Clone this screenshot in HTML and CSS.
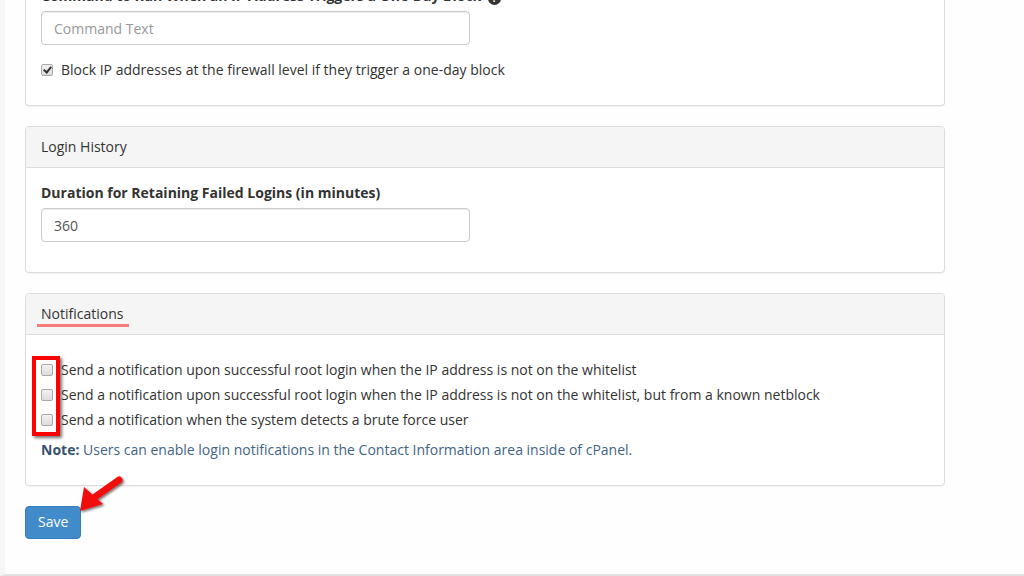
FILE: index.html
```html
<!DOCTYPE html>
<html>
<head>
<meta charset="utf-8">
<link rel="stylesheet" href="styles.css">
</head>
<body>
<div class="page">
  <div class="content">
    <div class="panel panel-first">
      <div class="panel-body">
        <div class="form-group">
          <label class="control-label">Command to Run When an IP Address Triggers a One-Day Block <span class="help-icon">?</span></label>
          <input class="form-control" type="text" placeholder="Command Text">
        </div>
        <div class="checkbox">
          <label><input type="checkbox" checked> Block IP addresses at the firewall level if they trigger a one-day block</label>
        </div>
      </div>
    </div>

    <div class="panel">
      <div class="panel-heading">Login History</div>
      <div class="panel-body">
        <div class="form-group">
          <label class="control-label">Duration for Retaining Failed Logins (in minutes)</label>
          <input class="form-control" type="text" value="360">
        </div>
      </div>
    </div>

    <div class="panel">
      <div class="panel-heading"><span class="marked">Notifications</span></div>
      <div class="panel-body notif-body">
        <div class="highlight-box"></div>
        <div class="checkbox">
          <label><input type="checkbox">Send a notification upon successful root login when the IP address is not on the whitelist</label>
        </div>
        <div class="checkbox">
          <label><input type="checkbox">Send a notification upon successful root login when the IP address is not on the whitelist, but from a known netblock</label>
        </div>
        <div class="checkbox">
          <label><input type="checkbox">Send a notification when the system detects a brute force user</label>
        </div>
        <p class="note"><strong>Note:</strong> Users can enable login notifications in the Contact Information area inside of cPanel.</p>
      </div>
    </div>

    <div class="actions">
      <button class="btn-save" type="button">Save</button>
      <svg class="arrow" width="64" height="50" viewBox="0 0 64 50">
        <defs>
          <filter id="sh" x="-30%" y="-30%" width="160%" height="160%">
            <feDropShadow dx="1.5" dy="1.5" stdDeviation="1.2" flood-color="#000" flood-opacity="0.55"/>
          </filter>
        </defs>
        <g filter="url(#sh)">
          <line x1="57" y1="9" x2="30" y2="28" stroke="#f20d0d" stroke-width="7" stroke-linecap="round"/>
          <polygon points="18,40 22,16 41,33" fill="#f20d0d"/>
        </g>
      </svg>
    </div>
  </div>
</div>
</body>
</html>
```
FILE: styles.css
```css
html, body {
  margin: 0;
  padding: 0;
  height: 576px;
  overflow: hidden;
}
body {
  background: #fff;
  font-family: "Open Sans", "Liberation Sans", sans-serif;
  font-size: 14px;
  line-height: 20px;
  color: #333;
}
.page {
  height: 576px;
  border-bottom: 2px solid #e2e2e2;
  border-left: 5px solid #f7f7f7;
  background: #fefefe;
  box-sizing: border-box;
  overflow: hidden;
}
.content {
  width: 920px;
  padding-left: 20px;
  position: relative;
}
.panel {
  background: #fff;
  border: 1px solid #ddd;
  border-radius: 4px;
  box-shadow: 0 1px 1px rgba(0,0,0,0.05);
  margin-bottom: 20px;
}
.panel-first {
  margin-top: -29px;
  border-top: none;
}
.panel-heading {
  background: #f5f5f5;
  border-bottom: 1px solid #ddd;
  padding: 10px 15px;
  border-radius: 3px 3px 0 0;
  color: #333;
}
.panel-body {
  padding: 15px;
}
.form-group {
  margin-bottom: 15px;
}
.control-label {
  display: block;
  font-weight: 700;
  margin-bottom: 5px;
}
.help-icon {
  display: inline-block;
  width: 13px;
  height: 13px;
  margin-left: 3px;
  border-radius: 50%;
  background: #333;
  color: #fff;
  font-size: 10px;
  line-height: 13px;
  text-align: center;
  vertical-align: -1px;
}
.form-control {
  display: block;
  box-sizing: border-box;
  width: 429px;
  height: 34px;
  padding: 6px 12px;
  font-family: inherit;
  font-size: 14px;
  line-height: 20px;
  color: #555;
  background: #fff;
  border: 1px solid #ccc;
  border-radius: 4px;
  box-shadow: inset 0 1px 1px rgba(0,0,0,0.075);
}
.form-control::placeholder {
  color: #999;
}
.checkbox {
  margin: 10px 0;
}
.checkbox + .checkbox {
  margin-top: -5px;
}
.checkbox label {
  display: block;
  position: relative;
  padding-left: 20px;
  min-height: 20px;
  cursor: pointer;
}
.checkbox input {
  -webkit-appearance: none;
  appearance: none;
  position: absolute;
  left: 0;
  top: 0;
  box-sizing: border-box;
  width: 12px;
  height: 12px;
  margin: 4px 0 0 0;
  border: 1px solid #a9a9a9;
  border-radius: 2px;
  background: linear-gradient(#f2f2f2, #dcdcdc);
}
.checkbox input:checked::after {
  content: "";
  position: absolute;
  left: 3px;
  top: 0px;
  width: 3px;
  height: 6px;
  border: solid #333;
  border-width: 0 2px 2px 0;
  transform: rotate(40deg);
}
.notif-body {
  position: relative;
}
.highlight-box {
  position: absolute;
  left: 6px;
  top: 21px;
  width: 20px;
  height: 72px;
  border: 4px solid #f00;
  box-shadow: 2px 2px 3px rgba(0,0,0,0.55);
}
.marked {
  position: relative;
}
.marked::after {
  content: "";
  position: absolute;
  left: -4px;
  right: -6px;
  bottom: -4px;
  height: 3px;
  background: #f77b7b;
}
.note {
  margin: 0 0 10px;
  color: #3f6585;
}
.note strong {
  color: #34526d;
}
.actions {
  position: relative;
  margin-top: 20px;
}
.btn-save {
  font-family: inherit;
  font-size: 14px;
  line-height: 20px;
  padding: 5px 12px 6px;
  color: #fff;
  background: #428bca;
  border: 1px solid #357ebd;
  border-radius: 4px;
}
.arrow {
  position: absolute;
  left: 37px;
  top: -35px;
}
```
